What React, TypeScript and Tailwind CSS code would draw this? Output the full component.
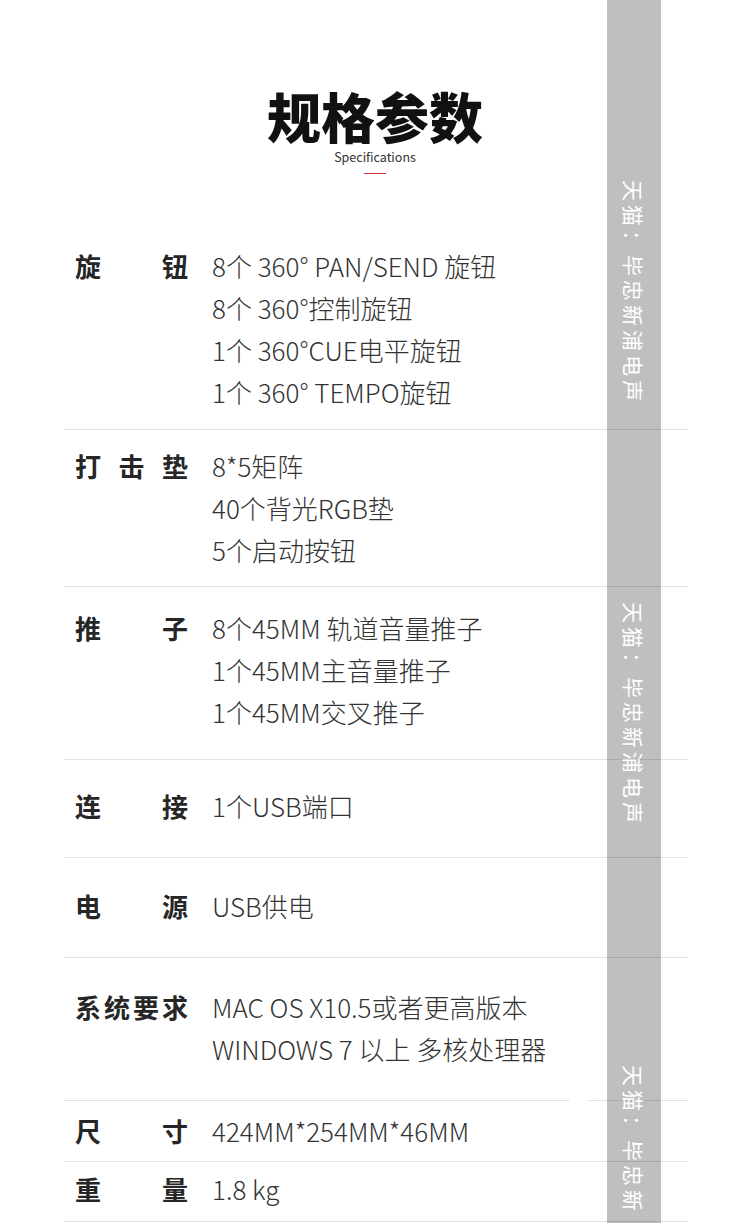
const rows = [
  {
    label: ["旋", "钮"],
    values: ["8个 360° PAN/SEND 旋钮", "8个 360°控制旋钮", "1个 360°CUE电平旋钮", "1个 360° TEMPO旋钮"],
    pad: "pt-[245px] pb-[16px]",
  },
  { label: ["打", "击", "垫"], values: ["8*5矩阵", "40个背光RGB垫", "5个启动按钮"], pad: "pt-[15px] pb-[15px]" },
  {
    label: ["推", "子"],
    values: ["8个45MM 轨道音量推子", "1个45MM主音量推子", "1个45MM交叉推子"],
    pad: "pt-[20px] pb-[26px]",
  },
  { label: ["连", "接"], values: ["1个USB端口"], pad: "pt-[25px] pb-[30px]" },
  { label: ["电", "源"], values: ["USB供电"], pad: "pt-[27px] pb-[30px]" },
  {
    label: ["系", "统", "要", "求"],
    values: ["MAC OS X10.5或者更高版本", "WINDOWS 7 以上 多核处理器"],
    pad: "pt-[28px] pb-[30px]",
  },
  { label: ["尺", "寸"], values: ["424MM*254MM*46MM"], pad: "pt-[9px] pb-[9px]" },
  { label: ["重", "量"], values: ["1.8 kg"], pad: "pt-[6px] pb-[11px]" },
];

function Watermark({ top }: { top: string }) {
  return (
    <div
      className={`absolute left-0 w-[54px] flex justify-center text-[21px] leading-[54px] tracking-[4px] text-white [writing-mode:vertical-rl] [text-orientation:sideways] ${top}`}
    >
      天猫：毕忠新浦电声
    </div>
  );
}

export default function App() {
  return (
    <div
      className="relative w-[750px] h-[1223px] overflow-hidden bg-white"
      style={{ fontFamily: '"Noto Sans CJK SC", "Noto Sans", sans-serif' }}
    >
      <div className="absolute left-0 right-0 top-[91px] flex flex-col items-center">
        <h1 className="text-[54px] leading-[50px] font-black text-[#111]">规格参数</h1>
        <p className="mt-[8px] text-[12.5px] leading-[16px] text-[#333]">Specifications</p>
        <div className="mt-[8px] h-px w-[22px] bg-[#d8303a]" />
      </div>

      <div className="ml-[64px] w-[624px]">
        {rows.map((r, i) => (
          <div key={i} className={`flex border-b border-[#e2e2e2] ${r.pad}`}>
            <div className="ml-[11px] flex w-[113px] justify-between text-[26px] leading-[42px] font-bold text-[#262626]">
              {r.label.map((c) => (
                <span key={c}>{c}</span>
              ))}
            </div>
            <div className="ml-[24px] text-[26px] leading-[42px] font-light text-[#333]">
              {r.values.map((v) => (
                <div key={v}>{v}</div>
              ))}
            </div>
          </div>
        ))}
      </div>

      <div className="absolute left-[607px] top-0 h-full w-[54px] bg-black/25">
        <Watermark top="top-[180px]" />
        <Watermark top="top-[602px]" />
        <Watermark top="top-[1065px]" />
      </div>
    </div>
  );
}
